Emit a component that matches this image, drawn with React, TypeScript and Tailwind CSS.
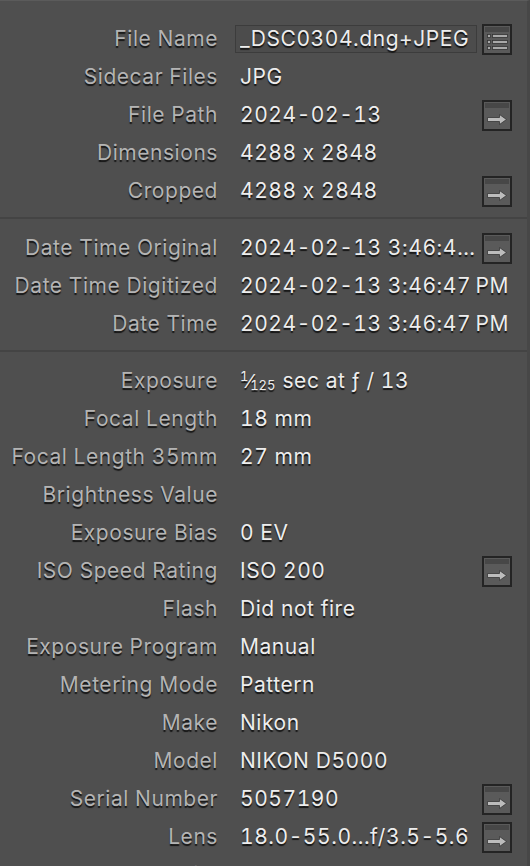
import React from "react";

type Row = {
  label: string;
  value?: React.ReactNode;
  button?: "list" | "arrow";
  boxed?: boolean;
  truncate?: boolean;
};

const ArrowButton = ({ kind }: { kind: "list" | "arrow" }) => (
  <svg width="30" height="31" viewBox="0 0 30 31" className="shrink-0">
    <rect x="1" y="1" width="28" height="29" fill="#5a5a5a" stroke="#242424" strokeWidth="2" />
    <rect x="3" y="3" width="24" height="5" fill="#474747" />
    {kind === "arrow" ? (
      <path
        d="M5.5 17.5 H17.5 V14.5 L24.5 19.5 L17.5 24.5 V21.5 H5.5 Z"
        fill="#bcbcbc"
        stroke="#363636"
        strokeWidth="0.8"
        strokeLinejoin="round"
      />
    ) : (
      <g fill="#a9a9a9" stroke="#343434" strokeWidth="0.8">
        <rect x="5.5" y="10.5" width="3" height="3" />
        <rect x="10.5" y="10.5" width="15" height="3" />
        <rect x="5.5" y="16.5" width="3" height="3" />
        <rect x="10.5" y="16.5" width="15" height="3" />
        <rect x="5.5" y="22.5" width="3" height="3" />
        <rect x="10.5" y="22.5" width="15" height="3" />
      </g>
    )}
  </svg>
);

// 1/125 shutter fraction, drawn like the macOS glyph
const exposure = (
  <span className="flex items-baseline">
    <span className="relative -top-[7px] text-[13px]">1</span>
    <span className="-ml-[1px] text-[19px]">⁄</span>
    <span className="relative top-[2px] -ml-[2px] text-[13px] tracking-normal">125</span>
    <span className="ml-[7px]">sec at ƒ / 13</span>
  </span>
);

const groups: Row[][] = [
  [
    { label: "File Name", value: "_DSC0304.dng+JPEG", button: "list", boxed: true },
    { label: "Sidecar Files", value: "JPG" },
    { label: "File Path", value: "2024-02-13", button: "arrow" },
    { label: "Dimensions", value: "4288 x 2848" },
    { label: "Cropped", value: "4288 x 2848", button: "arrow" },
  ],
  [
    { label: "Date Time Original", value: "2024-02-13 3:46:47\u202FPM", button: "arrow", truncate: true },
    { label: "Date Time Digitized", value: "2024-02-13 3:46:47\u202FPM" },
    { label: "Date Time", value: "2024-02-13 3:46:47\u202FPM" },
  ],
  [
    { label: "Exposure", value: exposure },
    { label: "Focal Length", value: "18 mm" },
    { label: "Focal Length 35mm", value: "27 mm" },
    { label: "Brightness Value" },
    { label: "Exposure Bias", value: "0 EV" },
    { label: "ISO Speed Rating", value: "ISO 200", button: "arrow" },
    { label: "Flash", value: "Did not fire" },
    { label: "Exposure Program", value: "Manual" },
    { label: "Metering Mode", value: "Pattern" },
    { label: "Make", value: "Nikon" },
    { label: "Model", value: "NIKON D5000" },
    { label: "Serial Number", value: "5057190", button: "arrow" },
    { label: "Lens", value: "18.0-55.0...f/3.5-5.6", button: "arrow" },
    { label: "Artist" },
  ],
];

const MetaRow = ({ row }: { row: Row }) => (
  <div className="flex h-[38px] items-center">
    <div className="w-[218px] shrink-0 text-right text-[#b4b4b4] whitespace-nowrap">{row.label}</div>
    <div className="ml-[17px] flex min-w-0 flex-1 items-center">
      {row.boxed ? (
        <div className="flex h-[28px] min-w-0 flex-1 items-center border border-[#3c3c3c] bg-[#4c4c4c] pl-[4px] text-[#ededed]">
          <span className="truncate">{row.value}</span>
        </div>
      ) : (
        <div className={`min-w-0 flex-1 pl-[5px] text-[#ededed] whitespace-nowrap ${row.truncate ? "truncate" : ""}`}>
          {row.value}
        </div>
      )}
      {row.button && (
        <div className="ml-[5px]">
          <ArrowButton kind={row.button} />
        </div>
      )}
    </div>
  </div>
);

export default function App() {
  return (
    <div
      className="h-[866px] w-[530px] overflow-hidden border-t border-[#5b5b5b] border-r-[3px] border-r-[#474747] bg-[#4f4f4f] text-[21px] tracking-[0.55px] [text-shadow:0_1.5px_1px_rgba(0,0,0,0.75)]"
      style={{ fontFamily: "Inter, 'Noto Sans', sans-serif", fontFeatureSettings: "'calt' 0, 'tnum' 1" }}
    >
      <div className="pt-[19px] pr-[15px]">
        {groups.map((group, gi) => (
          <div key={gi}>
            {gi > 0 && <div className="-mr-[15px] mt-[7px] mb-[10px] h-[2px] bg-[#444444]" />}
            {group.map((row) => (
              <MetaRow key={row.label} row={row} />
            ))}
          </div>
        ))}
      </div>
    </div>
  );
}
